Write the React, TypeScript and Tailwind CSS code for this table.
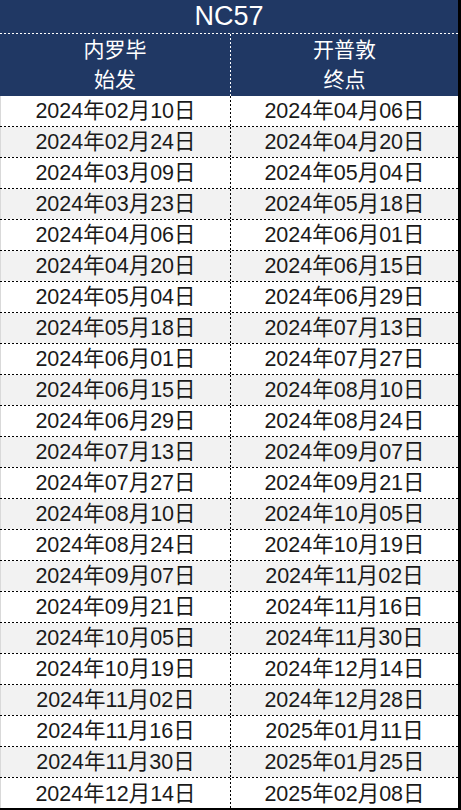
import React from "react";

const rows: [string, string][] = [
  ["2024年02月10日", "2024年04月06日"],
  ["2024年02月24日", "2024年04月20日"],
  ["2024年03月09日", "2024年05月04日"],
  ["2024年03月23日", "2024年05月18日"],
  ["2024年04月06日", "2024年06月01日"],
  ["2024年04月20日", "2024年06月15日"],
  ["2024年05月04日", "2024年06月29日"],
  ["2024年05月18日", "2024年07月13日"],
  ["2024年06月01日", "2024年07月27日"],
  ["2024年06月15日", "2024年08月10日"],
  ["2024年06月29日", "2024年08月24日"],
  ["2024年07月13日", "2024年09月07日"],
  ["2024年07月27日", "2024年09月21日"],
  ["2024年08月10日", "2024年10月05日"],
  ["2024年08月24日", "2024年10月19日"],
  ["2024年09月07日", "2024年11月02日"],
  ["2024年09月21日", "2024年11月16日"],
  ["2024年10月05日", "2024年11月30日"],
  ["2024年10月19日", "2024年12月14日"],
  ["2024年11月02日", "2024年12月28日"],
  ["2024年11月16日", "2025年01月11日"],
  ["2024年11月30日", "2025年01月25日"],
  ["2024年12月14日", "2025年02月08日"],
];

function HDash({ white }: { white?: boolean }) {
  return (
    <div
      className={`h-px shrink-0 ${
        white
          ? "bg-[image:repeating-linear-gradient(to_right,#ffffff_0px,#ffffff_2px,transparent_2px,transparent_4px)]"
          : "bg-[image:repeating-linear-gradient(to_right,#000000_0px,#000000_2px,transparent_2px,transparent_4px)]"
      }`}
    />
  );
}

function VDash({ white }: { white?: boolean }) {
  return (
    <div
      className={`w-px shrink-0 self-stretch ${
        white
          ? "bg-[image:repeating-linear-gradient(to_bottom,#ffffff_0px,#ffffff_2px,transparent_2px,transparent_4px)]"
          : "bg-[image:repeating-linear-gradient(to_bottom,#000000_0px,#000000_2px,transparent_2px,transparent_4px)]"
      }`}
    />
  );
}

export default function App() {
  return (
    <div
      className="w-[461px] h-[810px] flex flex-col border-r-[3px] border-b-2 border-black bg-white overflow-hidden"
      style={{ fontFamily: '"Liberation Sans", Arial, "Noto Sans CJK SC", sans-serif' }}
    >
      <div className="h-[33px] shrink-0 bg-[#203864] flex items-center justify-center text-[27px] leading-none text-white">
        NC57
      </div>
      <div className="bg-[#203864]">
        <HDash white />
      </div>
      <div className="h-[62px] shrink-0 bg-[#203864] flex text-white text-[21px] leading-[30px]">
        <div className="w-[230px] flex flex-col items-center justify-center">
          <span>内罗毕</span>
          <span>始发</span>
        </div>
        <VDash white />
        <div className="flex-1 flex flex-col items-center justify-center">
          <span>开普敦</span>
          <span>终点</span>
        </div>
      </div>
      {rows.map(([a, b], i) => {
        const last = i === rows.length - 1;
        return (
          <React.Fragment key={i}>
            <div
              className={`flex text-[21.5px] text-[#1a1a1a] border-l border-[#d9d9d9] ${
                last ? "flex-1" : "h-[30px] shrink-0"
              } ${i % 2 === 1 ? "bg-[#f2f2f2]" : "bg-white"}`}
            >
              <div className="w-[229px] flex items-center justify-center">{a}</div>
              <VDash />
              <div className="flex-1 flex items-center justify-center">{b}</div>
            </div>
            {!last && <HDash />}
          </React.Fragment>
        );
      })}
    </div>
  );
}
